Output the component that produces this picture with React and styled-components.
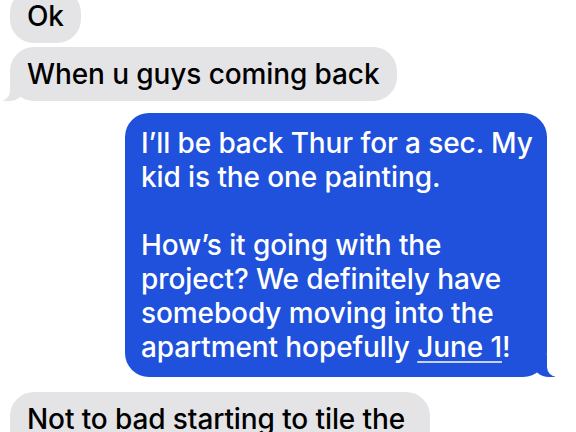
import React from "react";
import styled, { createGlobalStyle } from "styled-components";

const GlobalStyle = createGlobalStyle`
  html, body {
    margin: 0;
    padding: 0;
    background: #ffffff;
    overflow: hidden;
  }
  body {
    font-family: Inter, "Noto Sans", "Liberation Sans", sans-serif;
  }
`;

const Thread = styled.div`
  width: 576px;
  height: 432px;
  overflow: hidden;
  display: flex;
  flex-direction: column;
  padding: 0 29px 0 10px;
  box-sizing: border-box;
`;

const Stack = styled.div`
  display: flex;
  flex-direction: column;
  margin-top: -11px;
`;

const Bubble = styled.div`
  position: relative;
  align-self: ${(p) => (p.$me ? "flex-end" : "flex-start")};
  margin-top: ${(p) => p.$gap || 0}px;
  padding: ${(p) => (p.$me ? "13px 10px 13px 16px" : "10px 17px 10px 17px")};
  border-radius: 24px;
  background: ${(p) => (p.$me ? "#1f51dc" : "#e4e4e6")};
  color: ${(p) => (p.$me ? "#ffffff" : "#000000")};
  font-size: 28px;
  font-weight: 500;
  line-height: 34px;
  letter-spacing: -0.1px;
  width: ${(p) => (p.$width ? `${p.$width}px` : "auto")};
  box-sizing: border-box;

  ${(p) =>
    p.$tail &&
    `
    &::before {
      content: "";
      position: absolute;
      bottom: 0;
      ${p.$me ? "right: -8px;" : "left: -7px;"}
      width: 22px;
      height: 22px;
      background: ${p.$me ? "#1f51dc" : "#e4e4e6"};
      ${p.$me ? "border-bottom-left-radius: 16px 14px;" : "border-bottom-right-radius: 16px 14px;"}
    }
    &::after {
      content: "";
      position: absolute;
      bottom: 0;
      ${p.$me ? "right: -26px;" : "left: -26px;"}
      width: 26px;
      height: 22px;
      background: #ffffff;
      ${p.$me ? "border-bottom-left-radius: 10px;" : "border-bottom-right-radius: 10px;"}
    }
  `}
`;

const Line = styled.div`
  white-space: nowrap;
  min-height: 34px;
`;

const DateLink = styled.span`
  text-decoration: underline;
  text-decoration-color: rgba(255, 255, 255, 0.75);
  text-decoration-thickness: 2px;
  text-underline-offset: 4px;
`;

export default function App() {
  return (
    <>
      <GlobalStyle />
      <Thread>
        <Stack>
          <Bubble>Ok</Bubble>
          <Bubble $gap={4} $tail>
            When u guys coming back
          </Bubble>
          <Bubble $me $tail $gap={12} $width={422}>
            <Line>I’ll be back Thur for a sec. My</Line>
            <Line>kid is the one painting.</Line>
            <Line />
            <Line>How’s it going with the</Line>
            <Line>project? We definitely have</Line>
            <Line>somebody moving into the</Line>
            <Line>
              apartment hopefully <DateLink>June 1</DateLink>!
            </Line>
          </Bubble>
          <Bubble $gap={15} $width={420}>
            <Line>Not to bad starting to tile the</Line>
            <Line>bathroom floor</Line>
          </Bubble>
        </Stack>
      </Thread>
    </>
  );
}
